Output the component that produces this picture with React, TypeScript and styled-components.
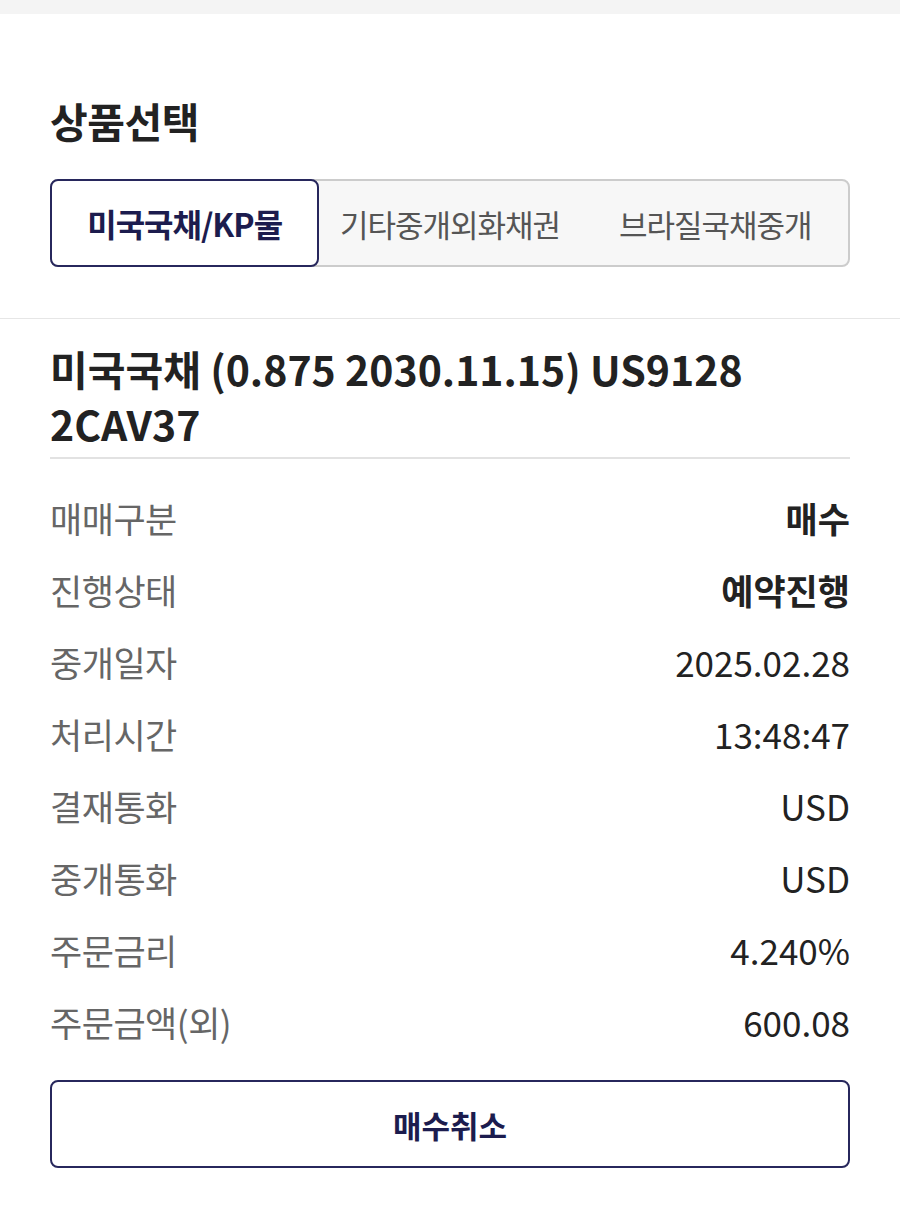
import styled, { createGlobalStyle } from "styled-components";

const GlobalStyle = createGlobalStyle`
  body {
    margin: 0;
    background: #ffffff;
    font-family: "Noto Sans CJK KR", "Noto Sans", sans-serif;
    color: #222222;
  }
`;

const tabs = ["미국국채/KP물", "기타중개외화채권", "브라질국채중개"];

const rows: { label: string; value: string; strong?: boolean }[] = [
  { label: "매매구분", value: "매수", strong: true },
  { label: "진행상태", value: "예약진행", strong: true },
  { label: "중개일자", value: "2025.02.28" },
  { label: "처리시간", value: "13:48:47" },
  { label: "결재통화", value: "USD" },
  { label: "중개통화", value: "USD" },
  { label: "주문금리", value: "4.240%" },
  { label: "주문금액(외)", value: "600.08" },
];

export default function App() {
  return (
    <>
      <GlobalStyle />
      <Page>
        <TopStrip />
        <SelectSection>
          <SectionTitle>상품선택</SectionTitle>
          <Segment>
            {tabs.map((t, i) => (
              <Tab key={t} $active={i === 0}>
                {t}
              </Tab>
            ))}
          </Segment>
        </SelectSection>
        <Detail>
          <ProductName>
            <NameLine>미국국채 (0.875 2030.11.15) US9128</NameLine>
            <NameLine>2CAV37</NameLine>
          </ProductName>
          <InfoList>
            {rows.map((r) => (
              <Row key={r.label}>
                <Label>{r.label}</Label>
                <Value $strong={r.strong}>{r.value}</Value>
              </Row>
            ))}
          </InfoList>
          <CancelButton>매수취소</CancelButton>
        </Detail>
      </Page>
    </>
  );
}

const Page = styled.div`
  width: 900px;
  min-height: 1215px;
  background: #ffffff;
`;

const TopStrip = styled.div`
  height: 14px;
  background: #f4f4f4;
`;

const SelectSection = styled.section`
  padding: 81px 50px 51px;
  border-bottom: 1px solid #e6e6e6;
`;

const SectionTitle = styled.h2`
  margin: 0 0 34px;
  font-size: 41px;
  line-height: 50px;
  font-weight: 700;
  letter-spacing: -0.5px;
  color: #222222;
`;

const Segment = styled.div`
  display: grid;
  grid-template-columns: repeat(3, 1fr);
  height: 88px;
  box-sizing: border-box;
  background: #f7f7f7;
  border: 2px solid #cccccc;
  border-radius: 8px;
`;

const Tab = styled.div<{ $active?: boolean }>`
  display: flex;
  align-items: center;
  justify-content: center;
  margin: ${(p) => (p.$active ? "-2px" : "0")};
  font-size: ${(p) => (p.$active ? "32px" : "31px")};
  letter-spacing: -1px;
  font-weight: ${(p) => (p.$active ? 700 : 400)};
  color: ${(p) => (p.$active ? "#1c1c4e" : "#555555")};
  background: ${(p) => (p.$active ? "#ffffff" : "transparent")};
  border: ${(p) => (p.$active ? "2px solid #27275c" : "none")};
  border-radius: 8px;
`;

const Detail = styled.section`
  padding: 22px 50px 0;
`;

const ProductName = styled.h3`
  margin: 0;
  padding-bottom: 6px;
  border-bottom: 2px solid #e2e2e2;
  font-size: 41px;
  font-weight: 700;
  color: #222222;
  white-space: nowrap;
`;

const NameLine = styled.span`
  display: block;
  line-height: 55px;
`;

const InfoList = styled.div`
  margin-top: 22px;
`;

const Row = styled.div`
  display: flex;
  justify-content: space-between;
  align-items: center;
  height: 72px;
`;

const Label = styled.span`
  font-size: 35px;
  letter-spacing: -0.5px;
  color: #666666;
`;

const Value = styled.span<{ $strong?: boolean }>`
  font-size: 35px;
  font-weight: ${(p) => (p.$strong ? 700 : 400)};
  color: #222222;
`;

const CancelButton = styled.button`
  display: block;
  width: 100%;
  height: 88px;
  margin-top: 23px;
  background: #ffffff;
  border: 2px solid #27275c;
  border-radius: 8px;
  font-family: inherit;
  font-size: 31px;
  font-weight: 700;
  color: #1c1c4e;
`;
